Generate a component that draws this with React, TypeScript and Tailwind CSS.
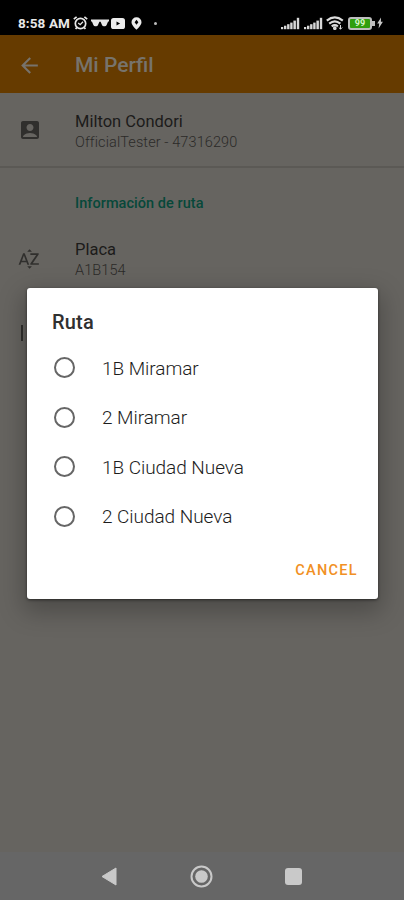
import { MdAccountBox, MdArrowBack, MdSortByAlpha } from "react-icons/md";

const ROUTES = ["1B Miramar", "2 Miramar", "1B Ciudad Nueva", "2 Ciudad Nueva"];

function SignalBars() {
  return (
    <svg width="19" height="13" viewBox="0 0 19 13" fill="#d8d8d8">
      <rect x="0" y="10" width="2.2" height="2.2" />
      <rect x="3" y="8.7" width="2.4" height="3.5" />
      <rect x="6.1" y="7.2" width="2.4" height="5" />
      <rect x="9.2" y="5.6" width="2.4" height="6.6" />
      <rect x="12.4" y="3.6" width="2.5" height="8.6" />
      <rect x="15.8" y="0.8" width="2.4" height="11.4" />
    </svg>
  );
}

function AlarmIcon() {
  return (
    <svg width="15" height="14" viewBox="0 0 15 14" fill="none" stroke="#e8e8e8" strokeWidth="1.7">
      <circle cx="7.5" cy="7.5" r="5.2" />
      <path d="M.8 3.2 3.6.9M14.2 3.2 11.4.9M3.8 11.4 2.6 13M11.2 11.4l1.2 1.6" />
      <path d="m5.2 7 2 1.7L10 5.8" strokeWidth="1.3" />
    </svg>
  );
}

function GlassesIcon() {
  return (
    <svg width="18" height="8" viewBox="0 0 18 8" fill="#e8e8e8">
      <path d="M0 .6h18v1.8h-.9L15.6 6q-.5 1.2-1.8 1.2h-1q-1.3 0-1.8-1.2L9.6 2.8H8.4L7 6Q6.5 7.2 5.2 7.2h-1Q2.9 7.2 2.4 6L.9 2.4H0z" />
    </svg>
  );
}

function PlayIcon() {
  return (
    <svg width="14" height="11" viewBox="0 0 14 11">
      <rect width="14" height="11" rx="2.6" fill="#ececec" />
      <path d="m5.5 3.6 3.6 1.9-3.6 1.9z" fill="#000" />
    </svg>
  );
}

function PinIcon() {
  return (
    <svg width="11" height="13" viewBox="0 0 11 13">
      <path d="M5.5.3a5 5 0 0 1 5 5c0 3.2-5 7.4-5 7.4s-5-4.2-5-7.4a5 5 0 0 1 5-5z" fill="#ececec" />
      <path d="m5.5 2.8 1.9 2.5-1.9 2.5-1.9-2.5z" fill="#000" />
    </svg>
  );
}

function WifiIcon() {
  return (
    <svg width="18" height="14" viewBox="0 0 18 14" fill="none" stroke="#dcdcdc" strokeWidth="2.1">
      <path d="M.8 4.6q8-6.4 16 0" />
      <path d="M3.2 7.6q5.6-4.6 11.2 0" />
      <path d="M5.7 10.3q3.1-2.4 6.2 0" />
      <circle cx="8.8" cy="12.2" r=".8" fill="#dcdcdc" />
      <path d="M14.5 9v4M12.8 11.5l1.7 1.7 1.7-1.7" strokeWidth="1" />
    </svg>
  );
}

function BatteryIcon() {
  return (
    <div className="flex items-center">
      <div className="flex h-[13px] w-[24px] items-center justify-center rounded-[3px] border-2 border-[#bdbdbd] bg-[#2f9e0d] text-[9px] leading-none font-bold text-[#d6f8c8]">
        99
      </div>
      <div className="h-[5px] w-[3px] bg-[#bdbdbd]" />
    </div>
  );
}

function StatusBar() {
  return (
    <div className="flex h-[35px] bg-black pt-[16px] pl-[18px]">
      <div className="flex h-[14px] items-center">
        <span className="w-[55px] text-[13.5px] leading-[14px] font-bold tracking-[0.1px] whitespace-nowrap text-[#e8e8e8]">
          8:58 AM
        </span>
        <AlarmIcon />
        <div className="ml-[3px]"><GlassesIcon /></div>
        <div className="ml-[2px]"><PlayIcon /></div>
        <div className="ml-[6px]"><PinIcon /></div>
        <div className="ml-[12px] size-[3px] rounded-full bg-[#bbb]" />
      </div>
      <div className="mr-[21px] ml-auto flex h-[14px] items-center">
        <SignalBars />
        <div className="ml-[4px]"><SignalBars /></div>
        <div className="ml-[3px]"><WifiIcon /></div>
        <div className="ml-[4px]"><BatteryIcon /></div>
        <svg className="ml-[2px]" width="6" height="12" viewBox="0 0 6 12" fill="#c8c8c8">
          <path d="M4 .5.2 6.6h2L1.6 11.5 5.9 4.8h-2z" />
        </svg>
      </div>
    </div>
  );
}

function RouteDialog() {
  return (
    <div className="absolute top-[288px] left-[27px] flex h-[311px] w-[351px] flex-col rounded-[3px] bg-white pt-[21px] shadow-[0_9px_24px_4px_rgba(0,0,0,0.25),0_1px_3px_rgba(0,0,0,0.5)]">
      <h2 className="pl-[25px] text-[20px] leading-[26px] font-medium tracking-[0.2px] text-[#303030]">Ruta</h2>
      <div className="mt-[8px] flex flex-col">
        {ROUTES.map((route) => (
          <label key={route} className="flex h-[49.5px] items-center pl-[27px]">
            <span className="size-[21px] rounded-full border-2 border-[#666]" />
            <span className="pt-[2px] pl-[27px] text-[19px] font-light tracking-[-0.05px] text-[#1c1c1c]">{route}</span>
          </label>
        ))}
      </div>
      <button className="mt-[21px] mr-[20px] self-end text-[14.5px] leading-[18px] font-medium tracking-[1.3px] text-[#f19024]">
        CANCEL
      </button>
    </div>
  );
}

export default function App() {
  return (
    <div className="relative flex h-[900px] w-[404px] flex-col overflow-hidden bg-[#666460] font-['Roboto',sans-serif]">
      <StatusBar />
      <header className="flex h-[58px] items-center bg-[#663b00] pt-[2px] pl-[17px] text-[#77736c]">
        <MdArrowBack size={25} />
        <h1 className="pt-[2px] pl-[33px] text-[21px] font-medium">Mi Perfil</h1>
      </header>

      <section className="flex h-[75px] items-center border-b-2 border-[#5b5955] pl-[18px]">
        <MdAccountBox size={24} className="text-[#302f2d]" />
        <div className="pt-[4px] pl-[33px]">
          <p className="text-[16.5px] leading-[21px] text-[#1c1b1a]">Milton Condori</p>
          <p className="text-[14.5px] leading-[21px] font-light tracking-[0.1px] text-[#2b2a28]">OfficialTester - 47316290</p>
        </div>
      </section>

      <h3 className="pt-[26px] pl-[75px] text-[14.5px] leading-[20px] font-medium tracking-[0.05px] text-[#07483a]">
        Información de ruta
      </h3>

      <section className="mt-[23px] flex h-[45px] items-center pl-[17px]">
        <MdSortByAlpha size={24} className="mb-[2px] text-[#302f2d]" />
        <div className="pt-px pl-[34px]">
          <p className="text-[16.5px] leading-[22px] text-[#1c1b1a]">Placa</p>
          <p className="text-[14.5px] leading-[20px] font-light tracking-[0.1px] text-[#2b2a28]">A1B154</p>
        </div>
      </section>

      {/* left edge of the next row's icon, the rest sits under the dialog */}
      <div className="mt-[43px] ml-[21px] h-[16px] w-[2px] bg-[#302f2d]" />

      <nav className="mt-auto flex h-[48px] items-center bg-[#666] pl-[101px]">
        <svg width="16" height="19" viewBox="0 0 16 19">
          <path d="M1 9.5 15 1v17z" fill="#c9c9c9" stroke="#c9c9c9" strokeLinejoin="round" />
        </svg>
        <svg className="ml-[73px]" width="23" height="23" viewBox="0 0 23 23">
          <circle cx="11.5" cy="11.5" r="10" fill="none" stroke="#c9c9c9" strokeWidth="2" />
          <circle cx="11.5" cy="11.5" r="6.3" fill="#c9c9c9" />
        </svg>
        <div className="ml-[72px] size-[17px] rounded-[3px] bg-[#c9c9c9]" />
      </nav>

      <RouteDialog />
    </div>
  );
}
